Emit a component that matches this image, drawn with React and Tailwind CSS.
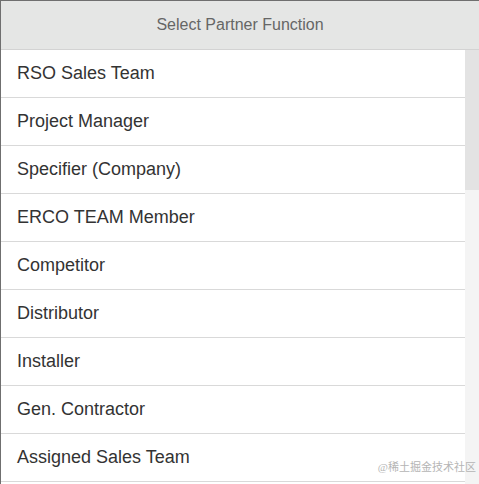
import React from "react";

const items = [
  "RSO Sales Team",
  "Project Manager",
  "Specifier (Company)",
  "ERCO TEAM Member",
  "Competitor",
  "Distributor",
  "Installer",
  "Gen. Contractor",
  "Assigned Sales Team",
];

const App = () => {
  return (
    <div
      className="relative h-[484px] w-[479px] overflow-hidden bg-white border-t border-l border-[#6f6f6f]"
      style={{ fontFamily: '"Liberation Sans", Arial, sans-serif' }}
    >
      {/* header */}
      <div className="h-[49px] flex items-center justify-center bg-[#e5e6e5] border-b border-[#d3d3d3] text-[16px] text-[#666]">
        Select Partner Function
      </div>

      <div className="flex h-[434px]">
        {/* list */}
        <div className="flex-1 overflow-hidden">
          {items.map((item) => (
            <div
              key={item}
              className="h-[48px] flex items-center pl-[16px] border-b border-[#d9d9d9] text-[18px] text-[#333]"
            >
              {item}
            </div>
          ))}
        </div>

        {/* scrollbar */}
        <div className="w-[14px] bg-[#f4f4f4]">
          <div className="h-[140px] bg-[#e3e3e3]" />
        </div>
      </div>

      <div
        className="absolute right-[3px] bottom-[9px] text-[11px] text-[#b5b5b5]"
        style={{ fontFamily: '"Liberation Serif", "Noto Sans CJK SC", serif' }}
      >
        @稀土掘金技术社区
      </div>
    </div>
  );
};

export default App;
